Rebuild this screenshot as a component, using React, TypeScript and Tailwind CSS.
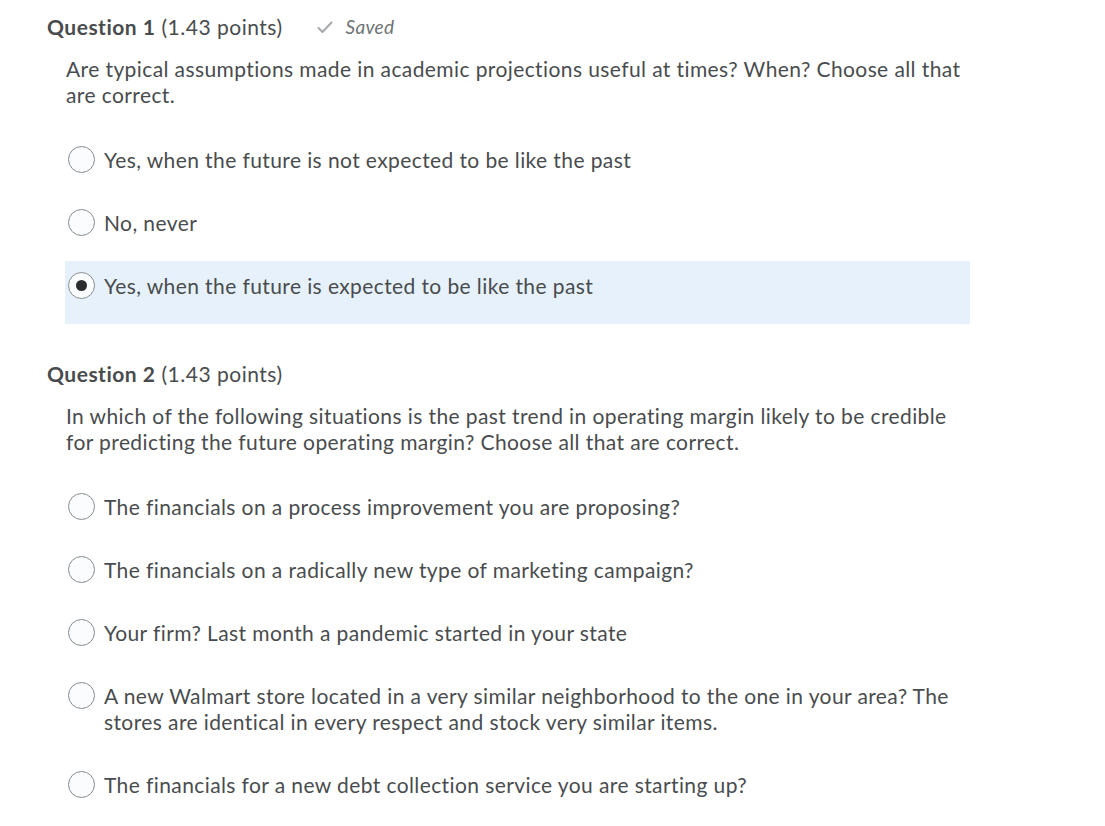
import React from 'react';

type Option = { label: string; checked?: boolean };

const q1Options: Option[] = [
  { label: 'Yes, when the future is not expected to be like the past' },
  { label: 'No, never' },
  { label: 'Yes, when the future is expected to be like the past', checked: true },
];

const q2Options: Option[] = [
  { label: 'The financials on a process improvement you are proposing?' },
  { label: 'The financials on a radically new type of marketing campaign?' },
  { label: 'Your firm? Last month a pandemic started in your state' },
  {
    label:
      'A new Walmart store located in a very similar neighborhood to the one in your area? The stores are identical in every respect and stock very similar items.',
  },
  { label: 'The financials for a new debt collection service you are starting up?' },
];

function Radio({ checked }: { checked?: boolean }) {
  return (
    <span className="mt-[-1px] flex h-[27px] w-[27px] shrink-0 items-center justify-center rounded-full border border-[#868c8f] bg-[#fbfcfe]">
      {checked && <span className="h-[11px] w-[11px] rounded-full bg-[#2a2c2e]" />}
    </span>
  );
}

function OptionRow({ option }: { option: Option }) {
  return (
    <div
      className={`flex w-[905px] items-start gap-[9px] pb-[25px] pl-[3px] pt-[12px] ${
        option.checked ? 'bg-[#e6f1fb]' : ''
      }`}
    >
      <Radio checked={option.checked} />
      <span className="pr-[20px] text-[21px] leading-[26px] tracking-[0.4px] text-[#494c4e]">{option.label}</span>
    </div>
  );
}

function Question({
  number,
  points,
  saved,
  text,
  options,
}: {
  number: number;
  points: string;
  saved?: boolean;
  text: string;
  options: Option[];
}) {
  return (
    <section>
      <div className="flex items-center text-[21px] leading-[28px] tracking-[0.5px] text-[#494c4e]">
        <span className="font-bold">Question {number}</span>
        <span className="ml-[6px]">({points} points)</span>
        {saved && (
          <span className="ml-[34px] flex items-center gap-[13px] text-[19px] italic tracking-[0.3px] text-[#6e7376]">
            <svg width="16" height="13" viewBox="0 0 16 13" fill="none">
              <path d="M1.5 7 L5.5 11 L14.5 1.5" stroke="#a5a9ac" strokeWidth="2" strokeLinecap="round" strokeLinejoin="round" />
            </svg>
            Saved
          </span>
        )}
      </div>
      <p className="ml-[19px] mt-[15px] w-[905px] text-[21px] leading-[26px] tracking-[0.4px] text-[#494c4e]">{text}</p>
      <div className="ml-[18px] mt-[27px]">
        {options.map((o) => (
          <OptionRow key={o.label} option={o} />
        ))}
      </div>
    </section>
  );
}

export default function App() {
  return (
    <div className="min-h-screen bg-white pl-[47px] pt-[13px]" style={{ fontFamily: 'Lato, "Open Sans", sans-serif' }}>
      <Question
        number={1}
        points="1.43"
        saved
        text="Are typical assumptions made in academic projections useful at times? When? Choose all that are correct."
        options={q1Options}
      />
      <div className="mt-[36px]">
        <Question
          number={2}
          points="1.43"
          text="In which of the following situations is the past trend in operating margin likely to be credible for predicting the future operating margin? Choose all that are correct."
          options={q2Options}
        />
      </div>
    </div>
  );
}
